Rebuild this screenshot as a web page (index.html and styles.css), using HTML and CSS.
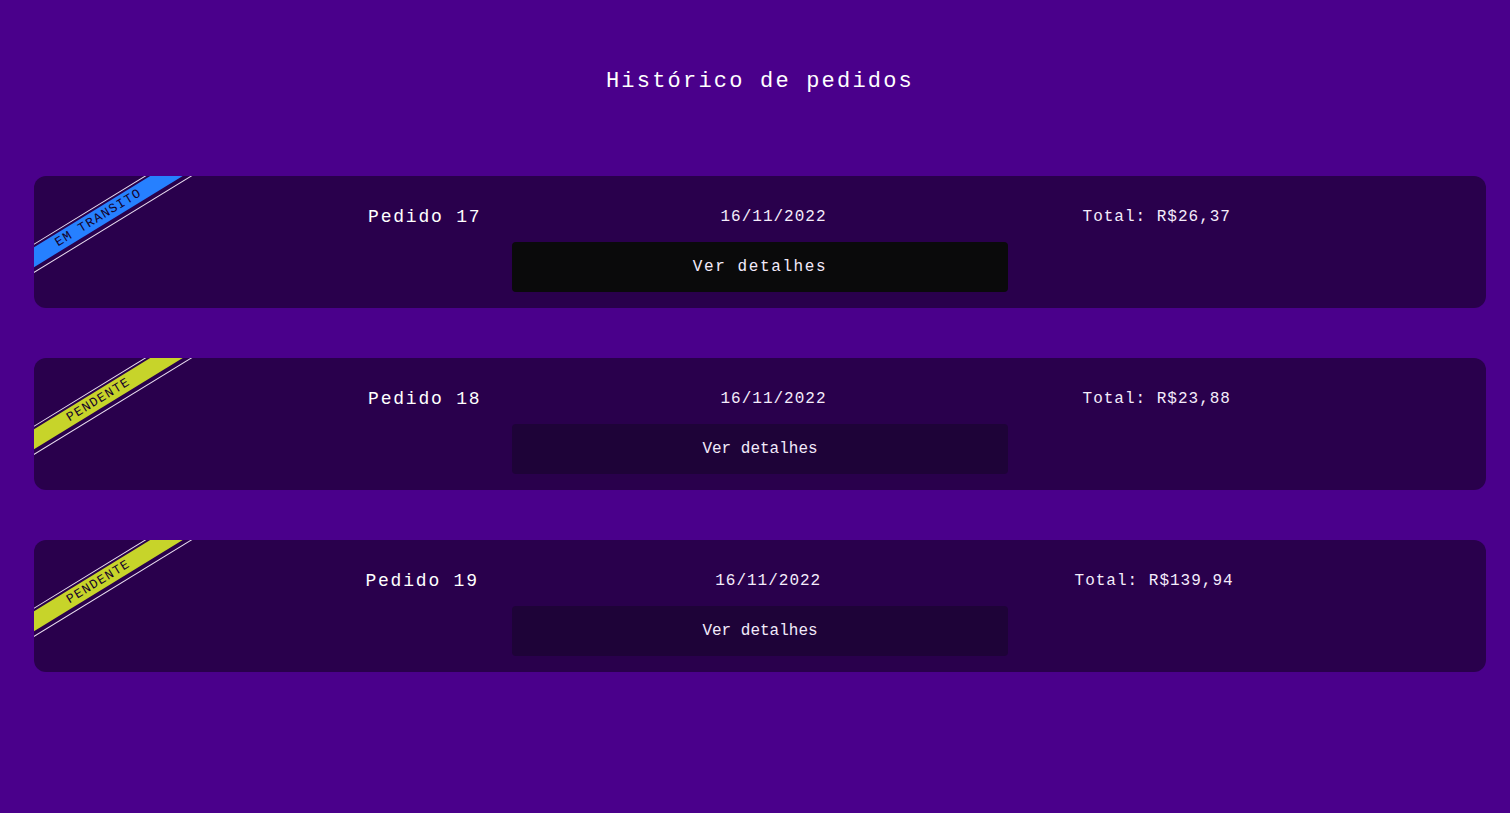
FILE: index.html
```html
<!DOCTYPE html>
<html lang="pt-BR">
<head>
<meta charset="utf-8">
<title>Histórico de pedidos</title>
<link rel="stylesheet" href="styles.css">
</head>
<body>
<main class="page">
  <h1 class="title">Histórico de pedidos</h1>
  <section class="orders">
    <article class="card">
      <div class="ribbon ribbon-transit"><span class="ribbon-band">EM TRANSITO</span></div>
      <div class="card-head">
        <p class="order-id">Pedido 17</p>
        <p class="order-date">16/11/2022</p>
        <p class="order-total">Total: R$26,37</p>
      </div>
      <button class="details details-active" type="button">Ver detalhes</button>
    </article>
    <article class="card">
      <div class="ribbon ribbon-pending"><span class="ribbon-band">PENDENTE</span></div>
      <div class="card-head">
        <p class="order-id">Pedido 18</p>
        <p class="order-date">16/11/2022</p>
        <p class="order-total">Total: R$23,88</p>
      </div>
      <button class="details" type="button">Ver detalhes</button>
    </article>
    <article class="card">
      <div class="ribbon ribbon-pending"><span class="ribbon-band">PENDENTE</span></div>
      <div class="card-head">
        <p class="order-id">Pedido 19</p>
        <p class="order-date">16/11/2022</p>
        <p class="order-total">Total: R$139,94</p>
      </div>
      <button class="details" type="button">Ver detalhes</button>
    </article>
  </section>
</main>
</body>
</html>
```

FILE: styles.css
```css
* { box-sizing: border-box; }

html, body {
  margin: 0;
  padding: 0;
  background: #4a008b;
  font-family: "Liberation Mono", "DejaVu Sans Mono", monospace;
  color: #f4ecfb;
}

.page {
  padding: 69px 24px 60px 34px;
}

.title {
  margin: 0;
  font-size: 22px;
  line-height: 25px;
  font-weight: 400;
  letter-spacing: 0.1em;
  text-align: center;
  color: #ffffff;
}

.orders {
  margin-top: 82px;
  display: flex;
  flex-direction: column;
  gap: 50px;
}

.card {
  position: relative;
  overflow: hidden;
  background: #29004c;
  border-radius: 12px;
  padding: 32px 0 16px;
  display: flex;
  flex-direction: column;
  align-items: center;
}

.card-head {
  align-self: stretch;
  display: flex;
  justify-content: space-evenly;
  align-items: flex-start;
  padding: 0 16px 0 95px;
}

.card-head p {
  margin: 0;
  white-space: nowrap;
}

.order-id {
  font-size: 18px;
  line-height: 18px;
  letter-spacing: 0.1em;
  color: #ffffff;
}

.order-date {
  font-size: 16px;
  line-height: 18px;
  letter-spacing: 1px;
  margin-right: 17px !important;
}

.order-total {
  font-size: 16px;
  line-height: 18px;
  letter-spacing: 1px;
}

.details {
  margin-top: 16px;
  width: 496px;
  height: 50px;
  border: none;
  border-radius: 4px;
  background: #1e0338;
  color: #f2eafa;
  font-family: "Liberation Mono", "DejaVu Sans Mono", monospace;
  font-size: 16px;
  cursor: pointer;
}

.details-active {
  background: #0a0a0b;
  letter-spacing: 0.1em;
}

.ribbon {
  position: absolute;
  left: -65px;
  top: 30px;
  width: 260px;
  border-top: 1px solid #e9dcf0;
  border-bottom: 1px solid #e9dcf0;
  padding: 2px 0 4px;
  transform: rotate(-31.5deg);
}

.ribbon-band {
  display: block;
  height: 17px;
  line-height: 17px;
  font-size: 13px;
  letter-spacing: 1.2px;
  text-align: center;
  color: #14002a;
}

.ribbon-transit .ribbon-band { background: #2680ff; }
.ribbon-pending .ribbon-band { background: #c7d42a; }
```
